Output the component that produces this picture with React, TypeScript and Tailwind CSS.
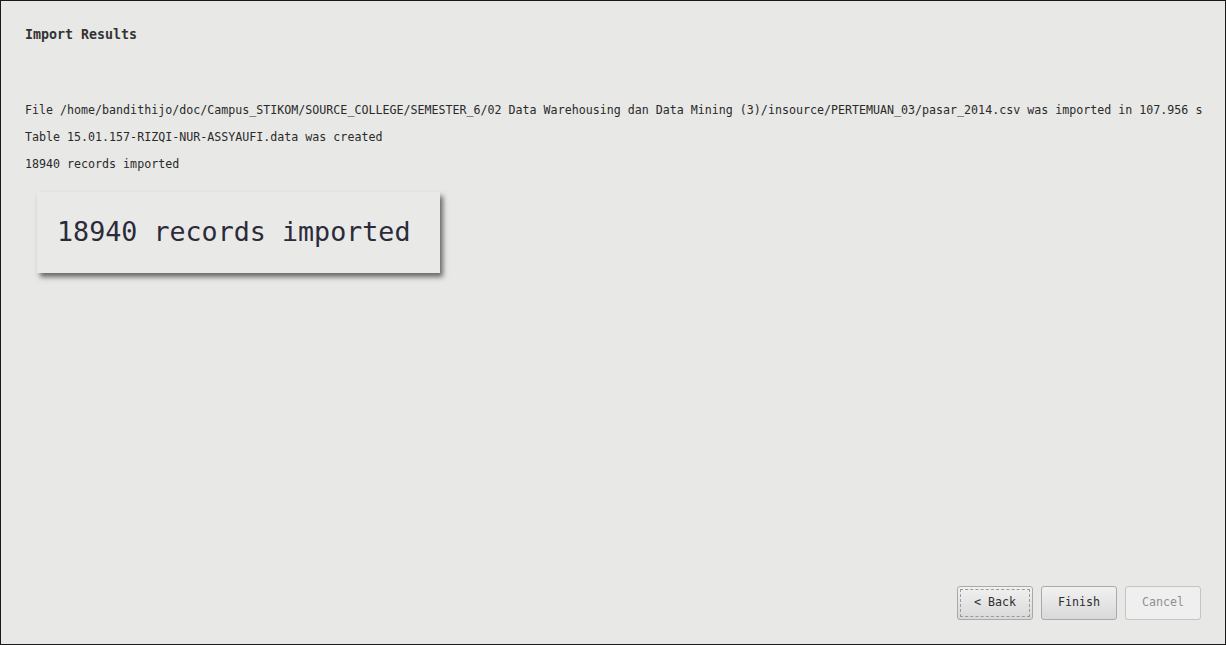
const mono = { fontFamily: '"DejaVu Sans Mono", "Liberation Mono", monospace' };

const messages = [
    "File /home/bandithijo/doc/Campus_STIKOM/SOURCE_COLLEGE/SEMESTER_6/02 Data Warehousing dan Data Mining (3)/insource/PERTEMUAN_03/pasar_2014.csv was imported in 107.956 s",
    "Table 15.01.157-RIZQI-NUR-ASSYAUFI.data was created",
    "18940 records imported",
];

const Button = ({ label, focused, disabled }: { label: string; focused?: boolean; disabled?: boolean }) => {
    if (disabled) {
        return (
            <button className="w-[76px] h-[34px] rounded-[3px] border border-[#c4c4c4] bg-[#efefef] text-[11.65px] text-[#8f8f8f]">
                {label}
            </button>
        );
    }
    return (
        <button className="w-[76px] h-[34px] rounded-[3px] border border-[#a9a9a9] bg-gradient-to-b from-[#f1f1f1] to-[#d9d9d9] p-[2px] text-[11.65px] text-[#2e2e2e]">
            <span
                className={
                    "flex h-full w-full items-center justify-center " +
                    (focused ? "border border-dashed border-[#9a9a9a]" : "border border-transparent")
                }
            >
                {label}
            </span>
        </button>
    );
};

export default function App() {
    return (
        <div
            className="w-[1226px] h-[645px] border border-[#1a1a1a] bg-[#e8e8e6] flex flex-col text-[#2a2a2a]"
            style={mono}
        >
            <div className="pl-6 pt-[26px]">
                <h1 className="text-[13.3px] font-bold leading-4 text-[#333]">Import Results</h1>
            </div>

            <div className="pl-6 pt-[54px] flex flex-col">
                {messages.map((m) => (
                    <span key={m} className="text-[11.65px] leading-[27px] whitespace-nowrap">
                        {m}
                    </span>
                ))}
            </div>

            {/* zoomed callout of the last line */}
            <div className="ml-9 mt-[14px] w-[403px] h-[81px] bg-[#e9e9e8] flex items-center pl-5 shadow-[3px_4px_5px_rgba(0,0,0,0.55)]">
                <span className="text-[26.7px] text-[#2b2b3a]">18940 records imported</span>
            </div>

            <div className="flex-1" />

            <div className="flex justify-end gap-[8px] pr-6 pb-6">
                <Button label="< Back" focused />
                <Button label="Finish" />
                <Button label="Cancel" disabled />
            </div>
        </div>
    );
}
